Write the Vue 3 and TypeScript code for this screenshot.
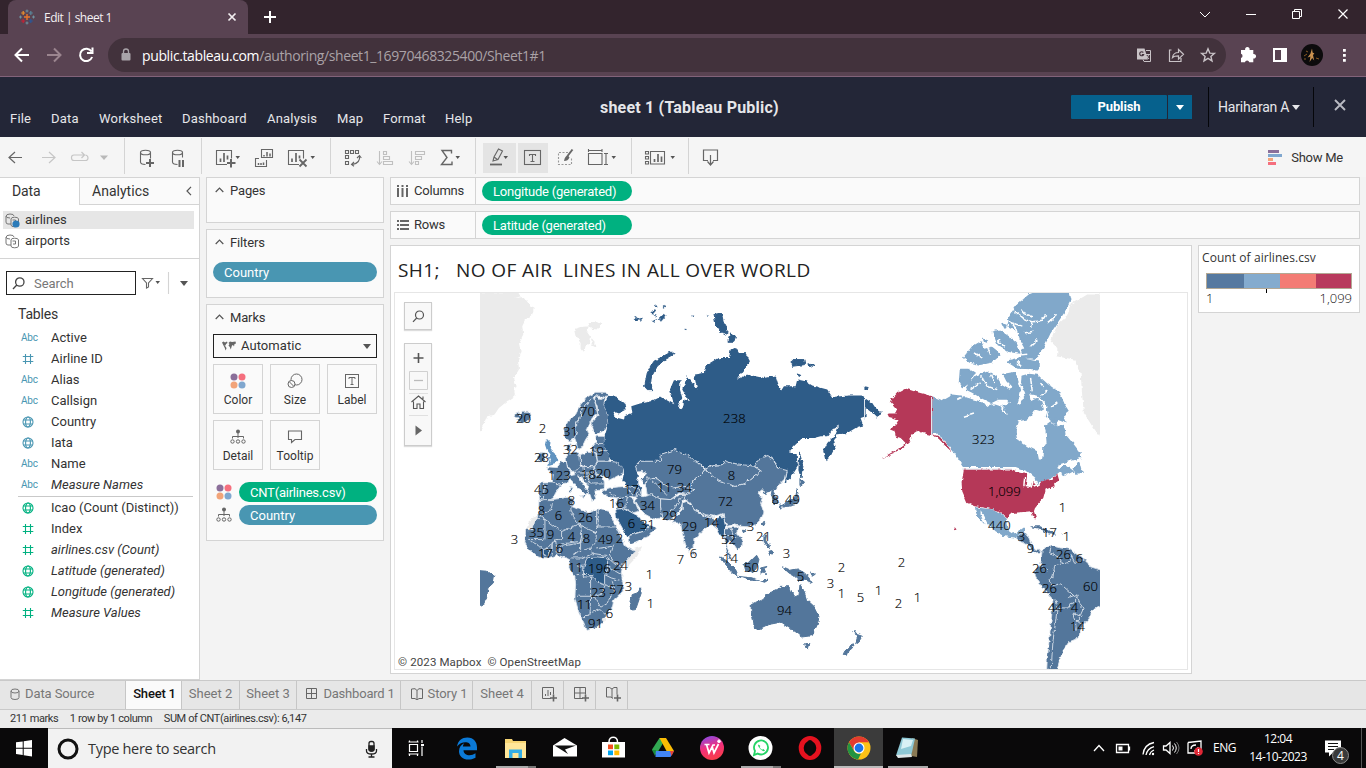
<script setup lang="ts">
interface Field { kind: 'abc' | 'num' | 'geo'; name: string; italic?: boolean }
interface MarkLabel { t: string; x: number; y: number }

const menus: string[] = ['File', 'Data', 'Worksheet', 'Dashboard', 'Analysis', 'Map', 'Format', 'Help']

const dimensions: Field[] = [
  { kind: 'abc', name: 'Active' },
  { kind: 'num', name: 'Airline ID' },
  { kind: 'abc', name: 'Alias' },
  { kind: 'abc', name: 'Callsign' },
  { kind: 'geo', name: 'Country' },
  { kind: 'geo', name: 'Iata' },
  { kind: 'abc', name: 'Name' },
  { kind: 'abc', name: 'Measure Names', italic: true },
]
const measures: Field[] = [
  { kind: 'geo', name: 'Icao (Count (Distinct))' },
  { kind: 'num', name: 'Index' },
  { kind: 'num', name: 'airlines.csv (Count)', italic: true },
  { kind: 'geo', name: 'Latitude (generated)', italic: true },
  { kind: 'geo', name: 'Longitude (generated)', italic: true },
  { kind: 'num', name: 'Measure Values', italic: true },
]

const raw = `20,523,419;2,542,429;70,587,412;31,570,432;32,570,450;28,541,458;19,596,452;123,559,476;18,588,475;20,603,474;45,541,490;8,571,501;8,541,511;6,558,516;26,585,518;16,616,504;17,631,490;11,664,488;34,684,488;79,674,470;34,647,506;29,669,516;6,631,524;31,647,525;29,689,527;35,536,533;9,550,535;4,571,537;8,586,539;49,605,540;2,619,539;3,514,540;17,545,554;6,559,549;11,575,568;196,599,569;24,620,566;23,598,593;57,616,590;3,628,587;11,584,605;6,609,614;91,595,624;1,649,575;1,650,604;7,680,560;6,693,554;238,734,419;8,731,476;72,725,502;8,775,500;49,792,500;14,711,523;3,750,527;52,728,540;21,763,537;14,730,559;50,751,568;3,786,554;5,800,577;94,784,611;2,841,568;3,830,584;1,841,594;5,860,598;1,878,591;2,901,563;2,898,604;1,917,598;323,983,440;1099,1004,492;440,999,526;1,1062,508;17,1049,533;1,1066,537;3,1021,537;9,1030,549;26,1063,555;6,1079,559;26,1039,569;60,1090,587;26,1049,589;44,1055,608;4,1074,608;14,1077,627`
const labels: MarkLabel[] = raw.split(';').map((r) => {
  const [n, x, y] = r.split(',').map(Number)
  return { t: n.toLocaleString('en-US'), x, y }
})
</script>

<template>
  <div class="screen">
    <!-- browser tabs -->
    <div class="tabstrip">
      <div class="tab">
        <svg class="fav" width="16" height="16" viewBox="0 0 16 16" fill="none">
          <path d="M8 5v6M5 8h6" stroke="#e8762d" stroke-width="1.400" />
          <path d="M4.200 2v4M2.200 4h4" stroke="#eb912c" stroke-width="1.200" /><path d="M11.800 2v4M9.800 4h4" stroke="#59879b" stroke-width="1.200" />
          <path d="M4.200 10v4M2.200 12h4" stroke="#c72035" stroke-width="1.200" /><path d="M11.800 10v4M9.800 12h4" stroke="#2b5798" stroke-width="1.200" />
          <path d="M8 .5v3M6.500 2h3M1.500 6.500v3M0 8h3M14.500 6.500v3M13 8h3M8 12.500v3M6.500 14h3" stroke="#7199a6" stroke-width=".9" />
        </svg>
        <span class="tabtitle">Edit | sheet 1</span>
        <svg class="tabclose" width="10" height="10" viewBox="0 0 10 10"><path d="M1.500 1.500l7 7M8.500 1.500l-7 7" stroke="#f2eef0" stroke-width="1.700" /></svg>
      </div>
      <svg class="newtab" width="14" height="14" viewBox="0 0 14 14"><path d="M7 1v12M1 7h12" stroke="#fff" stroke-width="2" /></svg>
      <svg class="winbtns" width="186" height="34" viewBox="1180 0 186 34" fill="none" stroke="#fff">
        <path d="M1200 12l5 5 5-5" /><path d="M1246 14.500h10" />
        <path d="M1292.500 11.500h7v7h-7zM1294.500 11v-1.500h7v7h-1.500" /><path d="M1338.500 9.500l9 9M1347.500 9.500l-9 9" stroke-width="1.200" />
      </svg>
    </div>
    <div class="addressbar">
      <svg width="108" height="42" viewBox="0 34 108 42" fill="none" stroke="#fff" stroke-width="2">
        <path d="M29 55H16M22 48.500L15.500 55l6.500 6.500" />
        <path d="M47 55h13M54 48.500l6.500 6.500-6.500 6.500" stroke="#9b858f" />
        <path d="M91.500 51.500a6.200 6.200 0 1 0 .6 5.500M92.500 47.500v5.500h-5.500" />
      </svg>
      <div class="omnibox">
        <svg width="34" height="34" viewBox="108 38 34 34"><rect x="121.500" y="53" width="9" height="7.500" rx="1" fill="#a9a4a9" /><path d="M123.500 53v-1.500a2.500 2.500 0 0 1 5 0V53" stroke="#a9a4a9" stroke-width="1.300" fill="none" /></svg>
        <span class="url"><b>public.tableau.com</b>/authoring/sheet1_16970468325400/Sheet1#1</span>
        <svg class="omniicons" width="96" height="34" viewBox="1130 38 96 34" fill="none" stroke="#c9c3c7" stroke-width="1.200">
          <path d="M1137 48.500h7.500l3.500 11h-11z" fill="#c9c3c7" stroke="none" /><path d="M1146 50.500h4.500v11h-6.500l-1-2M1145.500 54.500h4.500M1149 54q-1 3-3 4.500M1146.500 56l2.500 3" stroke-width="1" /><path d="M1143.300 52.500a2 2 0 1 0 .3 2h-1.800" stroke="#42323c" />
          <path d="M1171.500 50h-2v11.500h11.500V58M1172.500 57.500c.5-3.500 3-5 6-5V49.500l5 4.800-5 4.800v-3.200c-3 0-4.800.3-6 1.600z" />
          <path d="M1208 48.800l1.800 4.300 4.600.3-3.500 3 1.100 4.500-4-2.500-4 2.500 1.100-4.500-3.500-3 4.600-.3z" stroke-width="1.400" />
        </svg>
      </div>
      <svg class="exts" width="140" height="42" viewBox="1226 34 140 42">
        <path d="M1241 50h4.200a2.300 2.300 0 1 1 4.300 0h3.800v4a2.300 2.300 0 1 1 0 4.500v3.700h-4a2.300 2.300 0 0 0-4.400 0h-3.900v-4.200a2.200 2.200 0 0 0 0-4.200z" fill="#fff" />
        <path d="M1273 48h14v14h-14zM1275 50v10h6V50z" fill="#fff" fill-rule="evenodd" />
        <circle cx="1312" cy="55" r="11" fill="#0c0b0c" /><path d="M1312 48.500l.6 4 1.800 1-1.400 1.500 1.200 5.500-2-2.500-2.600 4 .8-5.500-2.800 1 2.800-3.800z" fill="#c9914f" /><path d="M1304 56l3-2M1316 58l3 1M1306 51l2 1M1304 59h2" stroke="#8a5a24" />
        <path d="M1343 49h2.800v2.800h-2.800zM1343 54h2.800v2.800h-2.800zM1343 59h2.800v2.800h-2.800z" fill="#fff" />
      </svg>
    </div>

    <!-- application header -->
    <header class="apphead">
      <nav class="menu"><span v-for="m in menus" :key="m">{{ m }}</span></nav>
      <div class="doctitle">sheet 1 (Tableau Public)</div>
      <div class="headright">
        <div class="publish"><span>Publish</span><i><svg width="8" height="5" viewBox="0 0 8 5"><path d="M0 0h8L4 5z" fill="#fff" /></svg></i></div>
        <div class="user">Hariharan A<svg width="8" height="5" viewBox="0 0 8 5"><path d="M0 0h8L4 5z" fill="#e6e6ea" /></svg></div>
        <svg class="closeedit" width="12" height="12" viewBox="0 0 12 12"><path d="M1 1l10 10M11 1L1 11" stroke="#b9bac2" stroke-width="1.900" /></svg>
      </div>
    </header>

    <!-- toolbar -->
    <div class="toolbar">
      <svg class="tg" width="124" height="36" viewBox="0 138 124 36" fill="none" stroke="#666" stroke-width="1.200">
        <path d="M22 157.500H9M15 152l-6 5.500 6 5.500" />
        <g stroke="#c6c6c6"><path d="M42 157.500h13M49 152l6 5.500-6 5.500" /><path d="M80 160.500h-6q-2.500 0-2.500-2.500v-.5q0-2.500 2.500-2.500H84M81.500 152l3 3-3 3M76 160.500h9.500q2.500 0 2.500-2.500t-2.500-3" /></g>
        <path d="M100 155.500h8l-4 4.500z" fill="#b9b9b9" stroke="none" />
      </svg>
      <svg class="tg" width="76" height="36" viewBox="125 138 76 36" fill="none" stroke="#666" stroke-width="1.100">
        <ellipse cx="145.500" cy="152.500" rx="5" ry="2.300" /><path d="M140.500 152.500v9.500q0 2.500 5 2.500M150.500 152.500v6" />
        <path d="M150 159v8M146 163h8" stroke-width="2" />
        <ellipse cx="177.500" cy="152.500" rx="5" ry="2.300" /><path d="M172.500 152.500v9.500q0 2.500 5 2.500M182.500 152.500v5" /><path d="M179.500 160v7M183 160v7" stroke-width="2" />
      </svg>
      <svg class="tg" width="128" height="36" viewBox="202 138 128 36" fill="none" stroke="#666" stroke-width="1.100">
        <path d="M227 164.500h-10.500v-14H231.500v8" /><path d="M220.500 158.500v3.500M224 153v9M227.500 155.500v4" stroke-width="1.700" /><path d="M231 159v8.500M227 163h8.500" stroke-width="2" /><path d="M235.500 156h4.500l-2.300 3z" fill="#555" stroke="none" />
        <path d="M261.500 157.500v-8h11v8zM259 158.500h-3.500v8h11v-6.500" /><path d="M264 155v1.500M267 152v4.500M270 153.500v3M258.500 163v2M261 163v2M263.500 162.500v2.500" stroke-width="1.500" />
        <path d="M299 164.500h-10.500v-14H303.500v8" /><path d="M292 158.500v3.500M296 153v9M299.500 155.500v3" stroke-width="1.700" /><path d="M299.500 159.500l7 7M306.500 159.500l-7 7" stroke-width="1.800" /><path d="M310.500 156h4.500l-2.300 3z" fill="#555" stroke="none" />
      </svg>
      <svg class="tg" width="144" height="36" viewBox="331 138 144 36" fill="none" stroke="#666" stroke-width="1.100">
        <path d="M345.500 150.500h3v3h-3zM350.500 150.500h3v3h-3zM355.500 150.500h3v3h-3zM345.500 155.500h3v3h-3zM345.500 161.500h3v3h-3z" /><path d="M359.500 156q1 7-7 8.500M357 158l2.500-2.500 1.800 2.500M354 162l-2.500 2.500 2.500 1.800" />
        <g stroke="#c0c0c0"><path d="M379.500 151v13M377 161.500l2.500 3 2.500-3M383.500 151.500h3v3h-3zM383.500 156.500h6v3h-6zM383.500 161.500h9v3h-9z" /><path d="M411.500 151v13M409 161.500l2.500 3 2.500-3M415.500 151.500h9v3h-9zM415.500 156.500h6v3h-6zM415.500 161.500h3v3h-3z" /></g>
        <path d="M451.500 153.500v-3H442l5 7-5.500 7h10.500v-3" stroke-width="1.400" /><path d="M455.500 156h4.500l-2.300 3z" fill="#555" stroke="none" />
      </svg>
      <svg class="tg" width="155" height="36" viewBox="476 138 155 36" fill="none" stroke="#666" stroke-width="1.100">
        <path d="M483 143h33v30h-33zM518 143h30v30h-30z" fill="#e4e4e4" stroke="none" />
        <path d="M493 161l1-4 4.500-8 4 2-4.500 8.500zM494 157l3.500 2.500" /><path d="M490 164.500h12" stroke-width="1.800" /><path d="M503.500 156h4.500l-2.300 3z" fill="#555" stroke="none" />
        <rect x="524.500" y="150.500" width="16" height="14" /><path d="M529.500 156v-1.500h6v1.500M532.500 154.500v7M530.500 161.500h4" />
        <path d="M568 152.500h-9.500v12h13v-6" stroke="#999" stroke-dasharray="2 1.500" /><path d="M572.500 149.500l-5 6.500" stroke-width="2" /><path d="M568 155.500q-3 0-4 5.500 4 0 5.500-3.500z" fill="#666" stroke="none" />
        <path d="M588.500 153.500h13.500v11h-13.500zM588.500 149v3M602 149v3M588.500 150.500H602M604 153.500h4M604 164.500h4M606 153.500v11" /><path d="M611.500 156h4.500l-2.300 3z" fill="#555" stroke="none" />
      </svg>
      <svg class="tg" width="56" height="36" viewBox="632 138 56 36" fill="none" stroke="#666" stroke-width="1.100">
        <path d="M645.500 151.500h3v2.500h-3zM645.500 156.500h3v2.500h-3zM645.500 161.500h3v2.500h-3zM650.500 151.500H664.500v12.500H650.500z" /><path d="M654.500 159v3M658 154v8M661.500 156.500v5.500" stroke-width="1.700" /><path d="M670.500 156h4.500l-2.300 3z" fill="#555" stroke="none" />
      </svg>
      <svg class="tg last" width="56" height="36" viewBox="689 138 56 36" fill="none" stroke="#666" stroke-width="1.200"><path d="M708 160.500h-4.500v-10.500H717.500v10.500H713M710.500 155v9M707.500 161.500l3 3.500 3-3.500" /></svg>
      <div class="showme">
        <svg width="15" height="16" viewBox="0 0 15 16"><path fill="#8b6f9a" d="M0 0h11v3H0z" /><path fill="#80a7cf" d="M0 4h14v3H0z" /><path fill="#f2a479" d="M0 8h5v3H0z" /><path fill="#f56f7e" d="M0 12h8v3H0z" /></svg>
        <span>Show Me</span>
      </div>
    </div>

    <!-- workspace -->
    <main class="work">
      <aside class="datapane">
        <div class="ptabs"><span class="pt on">Data</span><span class="pt">Analytics<svg width="6" height="10" viewBox="0 0 6 10"><path d="M5 .8L1 5l4 4.200" fill="none" stroke="#555" stroke-width="1.200" /></svg></span></div>
        <div class="sources">
          <div v-for="(s, i) in ['airlines', 'airports']" :key="s" class="src" :class="{ sel: i === 0 }">
            <svg width="15" height="15" viewBox="0 0 15 15" fill="none" stroke="#777"><path d="M6 11H3Q1 11 1 9V3.500Q1 1 5 1t4 2M1 3q0 2 4 2" /><path d="M6 6q0-1.800 3.700-1.800T13.500 6v6q0 1.800-3.800 1.800T6 12zM7.500 7h3v3H8" /><circle v-if="i === 0" cx="11" cy="11" r="3.600" fill="#2b7bb9" stroke="none" /></svg>
            <span>{{ s }}</span>
          </div>
        </div>
        <div class="searchrow">
          <div class="search"><svg width="13" height="13" viewBox="0 0 13 13" fill="none" stroke="#444" stroke-width="1.300"><circle cx="7.800" cy="5" r="4.200" /><path d="M4.800 8L1 12" /></svg><span>Search</span></div>
          <svg width="58" height="24" viewBox="136 271 58 24" fill="none" stroke="#666" stroke-width="1.100"><path d="M142.500 278.500h10l-4 4.500v4l-2 1v-5z" /><path d="M155.500 281h4.500l-2.300 3z" fill="#555" stroke="none" /><path d="M168.500 272v22" stroke="#d4d4d4" /><path d="M180 281h8l-4 5z" fill="#555" stroke="none" /></svg>
        </div>
        <div class="tables">Tables</div>
        <template v-for="(group, g) in [dimensions, measures]" :key="g">
          <div class="fields" :class="g ? 'green' : 'blue'">
            <div v-for="f in group" :key="f.name" class="field">
              <span class="fi">
                <em v-if="f.kind === 'abc'">Abc</em>
                <svg v-else-if="f.kind === 'num'" width="12" height="12" viewBox="0 0 12 12" fill="none" stroke="currentColor" stroke-width="1.100"><path d="M3.500 1v10M8.500 1v10M.8 3.500h10.500M.8 8.500h10.500" /></svg>
                <svg v-else width="12" height="12" viewBox="0 0 12 12" fill="none" stroke="currentColor" stroke-width="1.100"><circle cx="6" cy="6" r="5" /><ellipse cx="6" cy="6" rx="2.400" ry="5" /><path d="M1.500 4h9M1.500 8h9" /></svg>
              </span>
              <span class="fn" :class="{ it: f.italic }">{{ f.name }}</span>
            </div>
          </div>
        </template>
      </aside>

      <section class="cards">
        <div class="card pages"><h4><svg width="9" height="6" viewBox="0 0 9 6"><path d="M.7 5L4.500 1l3.800 4" fill="none" stroke="#555" stroke-width="1.200" /></svg>Pages</h4></div>
        <div class="card filters"><h4><svg width="9" height="6" viewBox="0 0 9 6"><path d="M.7 5L4.500 1l3.800 4" fill="none" stroke="#555" stroke-width="1.200" /></svg>Filters</h4><div class="pill bluep">Country</div></div>
        <div class="card marks">
          <h4><svg width="9" height="6" viewBox="0 0 9 6"><path d="M.7 5L4.500 1l3.800 4" fill="none" stroke="#555" stroke-width="1.200" /></svg>Marks</h4>
          <div class="marktype">
            <svg width="14" height="10" viewBox="0 0 14 10" fill="#666"><path d="M0 1.500l1.500-1L3 1.500 5 .5 5.500 2 4 3 3.500 4.500 2.500 4.500 4 6 4.500 7.500 3.500 9.500 2.800 7 1.500 4.500zM6.500 2L8 .5l2 .5 3.500-.5L14 2.500 12.500 3l-.5 2.500-1-1.500-1 .5L9.500 6l-.7 2.500L7.800 6 6.500 4.500 7.500 3z" /></svg>
            <span>Automatic</span>
            <svg width="8" height="5" viewBox="0 0 8 5"><path d="M0 0h8L4 5z" fill="#555" /></svg>
          </div>
          <div class="mbtns">
            <div class="mbtn"><svg width="16" height="16" viewBox="0 0 16 16"><circle cx="4" cy="4" r="3.500" fill="#8b6f9a" /><circle cx="12" cy="4" r="3.500" fill="#f56f7e" /><circle cx="4" cy="12" r="3.500" fill="#f2a479" /><circle cx="12" cy="12" r="3.500" fill="#80a7cf" /></svg>Color</div>
            <div class="mbtn"><svg width="16" height="16" viewBox="0 0 16 16" fill="none" stroke="#666"><circle cx="9.500" cy="6.500" r="5.500" /><circle cx="4.500" cy="11" r="3.500" fill="#fafafa" /><path d="M2.500 9l4 4" /></svg>Size</div>
            <div class="mbtn"><svg width="16" height="16" viewBox="0 0 16 16" fill="none" stroke="#666"><rect x="1.500" y="1.500" width="13" height="13" /><path d="M5 6V4.500h6V6M8 4.500v7M6.500 11.500h3" /></svg>Label</div>
            <div class="mbtn"><svg width="16" height="16" viewBox="0 0 16 16" fill="none" stroke="#666"><circle cx="8" cy="2.500" r="2" fill="#666" stroke="none" /><path d="M8 4v5M2.500 9.500V7.500h11v2" /><circle cx="2.500" cy="12.500" r="1.700" /><circle cx="8" cy="12.500" r="1.700" /><circle cx="13.500" cy="12.500" r="1.700" /></svg>Detail</div>
            <div class="mbtn"><svg width="16" height="16" viewBox="0 0 16 16" fill="none" stroke="#666" stroke-width="1.100"><path d="M1.500 2h13v8.500H8L4.500 13.500v-3h-3z" /></svg>Tooltip</div>
          </div>
          <div class="mrow"><svg width="16" height="16" viewBox="0 0 16 16"><circle cx="4" cy="4" r="3.500" fill="#8b6f9a" /><circle cx="12" cy="4" r="3.500" fill="#f56f7e" /><circle cx="4" cy="12" r="3.500" fill="#f2a479" /><circle cx="12" cy="12" r="3.500" fill="#80a7cf" /></svg><div class="pill greenp">CNT(airlines.csv)</div></div>
          <div class="mrow"><svg width="16" height="16" viewBox="0 0 16 16" fill="none" stroke="#666"><circle cx="8" cy="2.500" r="2" fill="#666" stroke="none" /><path d="M8 4v5M2.500 9.500V7.500h11v2" /><circle cx="2.500" cy="12.500" r="1.700" /><circle cx="8" cy="12.500" r="1.700" /><circle cx="13.500" cy="12.500" r="1.700" /></svg><div class="pill bluep">Country</div></div>
        </div>
      </section>

      <section class="canvas">
        <div class="shelf"><div class="sh"><svg width="12" height="12" viewBox="0 0 12 12" fill="#666"><path d="M0 0h2v2H0zM4.500 0h2v2h-2zM9 0h2v2H9zM0 3h2v9H0zM4.500 3h2v9h-2zM9 3h2v9H9z" /></svg>Columns</div><div class="pill greenp">Longitude (generated)</div></div>
        <div class="shelf"><div class="sh"><svg width="12" height="12" viewBox="0 0 12 12" fill="#666"><path d="M0 1h2v2H0zM0 5h2v2H0zM0 9h2v2H0zM3 1h9v2H3zM3 5h9v2H3zM3 9h9v2H3z" /></svg>Rows</div><div class="pill greenp">Latitude (generated)</div></div>
        <div class="lower">
          <div class="view">
            <h1>SH1;&nbsp;&nbsp; NO OF AIR&nbsp; LINES IN ALL OVER WORLD</h1>
            <div class="mapbox">
              <svg class="map" width="792" height="376" viewBox="395 293 792 376">
                <defs>
                  <clipPath id="world"><rect x="480" y="293" width="620" height="376" /></clipPath>
                  <filter id="coast" x="0" y="0" width="100%" height="100%" filterUnits="objectBoundingBox"><feTurbulence type="fractalNoise" baseFrequency=".22" numOctaves="2" seed="4" /><feDisplacementMap in="SourceGraphic" scale="4" xChannelSelector="R" yChannelSelector="G" /></filter>
                </defs>
                <g clip-path="url(#world)">
                  <g filter="url(#coast)">
                    <rect x="480" y="293" width="620" height="376" fill="#fff" />
                    <g transform="translate(480.600 289.600) scale(.33333)" class="land">
                      <path class="nd" d="M-9 8H110l8 12-18 5 30-3 20 28 10 5-5 20-20 15-10 20 3 25-13 25 5 25-8 25 3 30-15 25 8 25-10 20 7 8-25 17-25 20-13 20-22 5-8 20-12 25-9 0zM280 118l20-6 25-2-7 15 10 15-3 20-13 12-4 16-8-10V160l-15-20zM320 105l25-10 17 10-7 15-20-2zM333 145l12 15-2 12-10-5z" />
                      <path d="M102 372l10-4 6 10 7-10h23l4 10-7 15-20 7-17-8 7-6-11-4z" />
                      <path class="uk" d="M196 453h14l-2 17 7 8 13 25 5 9-8 8-22 6 5-14-3-10 5-7-12-15-5-15z" />
                      <path d="M180 488l12 2 3 10-5 14-13 3-5-12z" />
                      <path d="M252 415l10-20 23-20 15-30 20-23 25-14h30l8 10-8 7-10-5-25 0-20 22-15 15-7 30-13 15 2 30-5 15-14 7-13-7z" />
                      <path d="M298 385l7-30 15-15 18-18 7 23 7 27-17 13-10 20-5 15 5 15-10 15-12 25-11 5-6-25-4-10 5-15-2-30z" />
                      <path d="M345 318l13 12 17-8-5 23 10 30 3 30-8 15-25 12h-10l-7-17 2-17 17-18-2-30-8-20z" />
                      <path d="M258 470l10-8 4 18-7 8-7-6zM345 440h25l2 20-2 15 15 15 5 15-10 10h-30l-2-25-15-2 7-23 10-5zM350 462h20M333 480l50 4" />
                      <path d="M300 495l20-7 25 2 5 25-8 17-32-2-12-10z" />
                      <path d="M262 490h23l13 5 2 30-8 20h-22l-12-20-1-20z" />
                      <path d="M240 515h17l5 25 8 8-4 20-4 12-17 2-5 8-25-12 3-23-18-15 5-8 23 2z" />
                      <path d="M178 580h37l25 8-15 22-7 15-18 11-12-4-12-2zM192 582l-4 46" />
                      <path d="M285 545l13-15 42 2 10 28-5 30-10 10-10-5-25-35h-15zM290 550l55 0M310 532l5 40M300 562l40-4M325 560l5 35" />
                      <path d="M262 560l23-5 13 10 2 10 25 35-10 5-15-15-15-10-10-15zM300 618l14 0-4 8zM268 590l6 2-2 18-6-4z" />
                      <path d="M350 515h35l25 3 20 17-2 15-23 12-20 10-15-12-25-8-3-20z" />
                      <path d="M340 555l25 3 7 22-2 20-30 5 8 20-13 10-7-20-10-15 7-25zM325 580h45" />
                      <path d="M365 605l20-10 25-3 40-2 15 10-3 20-52 5-25-3-17-7z" />
                      <path class="ru" d="M430 560h40v20l12 15 0 15-42-15z" />
                      <path d="M436 590l40 8 10 28-12-4-15 0-6-12z" />
                      <path class="ru" d="M385 318l25 7 22 15 3 22-20 10-17-7 8 22 24 6 2-13 23-10-3-20 26-8 32-7 30-15 15 10 25 14-12-44 12-28h20l-2 28 7 25-13 25 13 10 7-30 13 5-20-35 15-40 30 40-10-45 30-5 5-20 40-25h30l5-25 15-8 10 18h20l13 25-13 20-25 33 30-13 50 10 35-7 7 22 10 23 8-13h35l5-20 25 5 20 13 45 12 15 22 50-4h35l35 22 10 15 18 13-13 17-15-15-20-15v25l-15 5 8 23-18 4-30 18-32 5-8 20 5 15-15 30-15 15-7-30 12-25 25-25 10-27-20 12-15 20h-20l-20 5h-35l-25 25-15 18 23 7 4 35-22 35-18 15 6-20 2-17-25-3-15-35-20-7-15 7-10 25-15 3-50-8-35-10-5 10h-40l-15 13-20-18-15-5-20-20-20-5-15-10-47 15 2 20h-60l-15 15 5 18 5 12-10 20-40-5 5-25v-15l-20-17-22-6-3-22-15-15 2-35 11-35-3-30-10-30z" />
                      <path class="ru ns" d="M492 290l8-40 20-35 52-28 8 8-30 17-20 18-18 32-2 23 8 15h-18zM700 75l22-5 6 25 12 20-2 20-26-15-7-20zM742 155l8-25 15 10-5 15zM935 210l35 0 2 15-37 5zM980 222l20 5-8 5zM950 250l12 5-6 6zM1150 292l16 2-4 6-12-2zM957 490l10 40-6 32-6-20z" />
                      <path class="ru dots" d="M460 85l12-3 5 6-12 5zM478 86l8 2-6 8zM510 70l10-11 4 6-8 9zM515 95l14-6-6 10zM535 88l16-16 6 6-16 18zM520 48l8-3 2 5zM548 50l8 2-8 5zM520 78l10 0-4 5zM633 78l5 1-3 3zM680 78l5 1-3 3zM615 118l6 1-3 3z" />
                      <path d="M465 530l15-15h60l-2-20 47-15 15 10 20 5 20 20 15 5 17 20-12 20-20 10-15 30-25-8-30 8-15-10-25-22-20-3v25l-15-5-15-15 18-18-13-7-15 3z" />
                      <path d="M625 600l13-25 22-20 15-17 15 17 25 20 50 15 30-10 30-25 17-10-20-15 18-25 22-7 18 12 10 25 30 8-5 22-15 15-15 20-15 5-15 10-10-15-13 10 13 15-5 15 10 30-10 20-15 15-20 7-25-2-20-5-20 5-10-20-2-18-28 8-25-5-35-15-10-20-25-15z" />
                      <path d="M675 535l15-7 40-3 5-13 15 8 35 5 35 5 22 15-17 10-30 25-30 10-50-15-25-20z" />
                      <path d="M605 640l15-5 20 25 35 20 30 10 20-15-7 20-13 20-10-10-20 10-20 20-15 15-2 20-13 15-10-20-10-35-5-30-25 0 10-20 20-20zM636 782l6 4v12l-6 0zM640 664l38 18 22 2" />
                      <path class="dk" d="M708 700l12-25 10 15 5 20-5 30-10 5-12-25z" />
                      <path d="M735 715l40-3-7 18 17 20v15l-15 15-10-15-15-10-7 10 7 25 10 20-7 2-10-22-5-30zM750 712l10 30M738 740l35 5" />
                      <path class="ns" d="M958 566l14 12-14 10zM950 598l4 27-9 17-25 6-20 2 25-15 20-13zM898 645l6 8-4 6zM875 600l10 20 7 20-12 2-8-27zM718 800l22 15 25 25 7 16-17-6-20-25zM770 860l45 5 20 7h-30zM840 874l22-2-10 6zM790 822l15-2 23-23 7 13-7 25-10 13-23-6zM840 835l22-5-14 8 7 17-9-10-4 11zM850 735l8 2-3 18 10 10 5 15-12-12-8-14zM862 785l12-2 2 10-8 4zM850 695l3 2-4 12-4-6zM788 722l8 2-4 6zM905 832l10 3 15 7 20-4 22 12 13 15 10 15-17-8h-23l-15-14-15-8zM990 850l14 4-10 6z" />
                      <path class="ns" d="M812 945l36-15 14-20 16-5 12-5 10-10 25 2 3 13 17 17 10-4 3-33 10 15 10 30 22 20 15 30-5 25-15 33-30 4-15-12-15-10-10-5-25-17-38 7-27 13h-13l-4-28-6-25zM972 1062h16l-5 16-7-3zM1120 1022l10 13 15 5-10 15-10 7 5-17zM1118 1062l2 8-15 15-5 13-12-3 4-10z" />
                      <g transform="translate(0 480)">
                        <path d="M500 85l30 3 30 22 15 5 25-3 25 3 15 5-20 15-25-5-25 20-30-2-20-8-20-5-5-25zM510 90l50 45" />
                        <path d="M468 130l17 12 25-7 30 13v27l8 30-28 3-25-13-15-15-15-25z" />
                        <path d="M540 148l30 2 30-15 15 0-10 25-5 20-20 20-10 12-22-4-8-33zM605 140l-35 50" />
                        <path d="M410 145l30-5 20 10 15 35-20 5-25-15-25 5zM440 140l-5 38M385 130l20 10" />
                        <path class="dk" d="M405 180l25-5 25 15 20 10 13 20 22 5-20 20-45 13-5 7-15-30-17-30z" />
                        <path d="M445 258l45-13 20-20 15 10-20 25-35 15-23 7z" />
                        <path class="nd" d="M455 300l30-10-15 30-32 34-3-24 25-25zM155 205l22-8-12 13-5 25h-22z" />
                        <path d="M175 155l15-5 25 0 55-8 10 13-8 15 18 8 35 12 25-12 35 7 15 35 15 30 10 20 10 20 20 12 8 3-25 25-13 20-3 20 5 30v25l-27 25-5 25-15 20-15 25-20 15-28 8-7-23-15-30-12-45 2-40-2-25-18-25 2-25-17-7-20-6-30 8-25-2-30-23-12-20 2-40h22l5-25 12-12z" />
                        <path class="dk" d="M320 325l30-3 32 3-2 25-8 25v30l-17-5-20-18h-27l2-30zM185 300l18-3 2 20-20 0z" />
                        <path class="bd" d="M215 160l-2 18-35 20M165 210h28v60h-50M178 198l65 48 48-22-20-40 0-20M291 224l57 26M348 180v52h60M353 180v54M243 246v20l-25 8-20 25M300 224l5 50-65 10M243 290l55-10 5-20M300 280l0 20-20 15M348 234l-2 44-18 20 12 14 40 6M308 300l20-2M340 312l-35 15M395 290l-48 8M400 285l-12 35 15 20 30 5M382 325l25 22 20 5M380 350l50 30M372 375l20 10 35 10M288 375h50M290 440h50l20-5 15-30M330 382l0 60M375 405l30 20M340 440l20 32 20-12 15-30M330 440l-2 60-30 2M328 490l30-10 22 20M395 395l10 30M150 275l20 10 15 15M215 275v40M225 270l5 42M240 285l-5 28M272 325h35M290 350l20 0" />
                        <circle class="nd" cx="370" cy="510" r="6" />
                        <path class="ns" d="M480 415l2 15-17 50-15 2-2-22 7-25 15-5zM-9 363l29 2 22 15-4 20-16 15-4 30-10 20-18 3z" />
                      </g>
                    </g>
                    <g transform="translate(880.600 289.600) scale(.33333)" class="land">
                      <path class="nd" d="M669 15h-49l-50 30-10 35-30 25-20 50 20 20v25l50 10 20 40 5 70 5 50 25 40 20 27h14z" />
                      <path class="ca" d="M155 320l30 12 30-17 25 3 20 7 40 10 25 15 5-10 30 10 20-5 5-40 15-30 12 2 8 30-10 38 10-5 15-25 10-10 5 30 20-10 10 10-25 40-15 15-25 5-10 30 5 25 30 20 30 15 5 25h10l3-35 10-15-3-35-5-15 20-15 20 15 20-5 5 30 25 30 20 25 2 15-37 10-30 10-5 15 25-15 25 20-30 15-10-15-20 15-30 15-20 10-5-20-25-20-35-13H250l-25-37-15-20-25-30-20-15h-10z" />
                      <path class="ca ns" d="M580 540l15-20 5 20 10 8-25 2zM425 260l20-5 25 3 30 27 35 25 15 35 12 20-15 12 8 20-32-12 5 20-30-25 5-30-15-20-20-15-30-5-15-20zM262 290l25-30 35-12 25 15 15 25 25 15v25h-35l-20 10-30-15-25-15-20-10zM240 240h22l18 10-13 28-22 15-8-13zM385 82l25-35 35-30 25-10h95l5 22-23 42-20 30-20 30-25 52-45 6-15-30-15-40-22-10zM250 205l25-32 25-15 12 22 22-6 25 20-25 22-32 8-35-7zM338 128l17-5 30 20 22 20 10 27-32-5-32-20zM380 215l40-10 52 10v22l-60-2zM370 255l30-5 12 25-15 18-18-20zM425 180l52 8-10 18-42-5zM368 105l8 2-3 8zM310 150l10 4-6 6z" />
                      <path class="fj" d="M400 62l30 25 25 10 30-5 10-15M455 97l-5 15M420 60l10 12 25 10M500 100l30-25M395 100l30 10M430 130l30-5M450 170l20-20M280 190l25 15M300 260l20 30 30 10M330 255l10 25M270 300l30-20M500 300l-20 20M530 340l-20 15M250 380l30-10M450 265l5 40M230 330l20-10M350 150l20 20M390 200l50-6M360 350l20 25M320 170l10 25M410 215l10 15M480 280l10 15M390 150l20-8M258 312l35 18 32 18 22-8 40-2M415 270l10 30M470 330l25 25 10 40M385 90l20 25 12 40 12 22" />
                      <path class="ca" d="M452 345l14-20 16 10 8 24-12 8-20-6z" />
                      <path class="us" d="M28 335l22-25 25-13 25 8 25 7 30 8v117l-30-7-10-8-20 13-7 20-23 20-25 15-28 11 38-21 25-20-15-15-15-5-3-15-14-5 17-15 10-15-30-8-5-10h25l5-12zM155 435l20 5 25 25 12 20-17-15-20-22zM222 712l6 8-6 2zM20 498l8-3-2 5zM5 506l8-3-2 4z" />
                      <path class="us" d="M250 540h145l20 8 25 7-5 35 15 2 5-17 15 15 25-20 20-2 15-16 5 18-15 20-25 10-7 25-23 25-5 15 8 25-8-2-8-23-32 3-25 2-17 15-23-20-15-5-25-5-30-5-25-10-15-35-2-25z" />
                      <path class="fj" d="M412 545l25 5 8 8M432 562l-2 28M446 562l10 18-4 14M458 590l20-8" />
                      <path class="ca" d="M283 652l17 3 40 5 15 8 23 19 7 38 10 7 15-4 22-16-2 18-15 15-45-5-25-15-25-25-10-20-10-15 0 10 12 30-14-15-13-22z" />
                      <path d="M405 745l25-17 15 17 10 25 10 12h20l-5 6-20 2-20-25-20-10z" />
                      <path class="thin" d="M448 710h32l15 10 20 5 15 10h-25l-25-17-25-4zM540 730l8 2-6 3z" />
                      <path d="M485 780l25-12 30 7 25 3 25 17 25 15 10 20 44 14v100l-34 18-10 25-20 25-7 15-8 20-25 10-10 15-10 15-5 15-10 35 0 9h-32l2-36 7-70 6-60 4-50-22-25-20-25-15-30 20-25 3-25z" />
                      <path class="bd" d="M512 768l-5 22 25 8 15 25-25 5-5 35-12 10 10 15 25-5 45 40 0 15-15 5-8 12-22 0-18 12M480 830l20 15M522 930l8 25-5 40-8 60-5 84M547 823l20-5 5-20 10 20 20-2 10-10M562 925l25-10 20 45-8 18-22-5 5 15 25 20M605 978l-20 20 2 25" />
                    </g>
                  </g>
                  <path d="M931.500 397v38M962 469h50M864.500 399v21" stroke="#dfe6ee" stroke-width="1" />
                </g>
                <g class="labels"><text v-for="(l, i) in labels" :key="i" :x="l.x + 0.4" :y="l.y + 4.200">{{ l.t }}</text></g>
              </svg>
              <div class="mctl find"><svg width="13" height="13" viewBox="0 0 13 13" fill="none" stroke="#555" stroke-width="1.200"><circle cx="7.500" cy="5" r="4" /><path d="M4.700 8L1 11.800" /></svg></div>
              <div class="mctl zoomer"><svg width="27" height="102" viewBox="0 0 27 102" fill="none" stroke="#555"><path d="M13.500 9v10M8.500 14h10" stroke-width="1.600" /><path d="M4.500 27.500h18v18h-18z" stroke="#d0d0d0" /><path d="M9 36.500h9" stroke="#bbb" stroke-width="1.300" /><path d="M4 49.500h19M4 71.500h19" stroke="#e0e0e0" /><path d="M6.500 58L13.500 52l7 6M8.500 57.500v7h3.500v-4.500h3v4.500h3.500v-7M18 55v-2.500" stroke-width="1.100" /><path d="M10.500 81.500v10l6.500-5z" fill="#666" stroke="none" /></svg></div>
              <div class="credit">© 2023 Mapbox&nbsp; © OpenStreetMap</div>
            </div>
          </div>
          <div class="legend">
            <div class="lt">Count of airlines.csv</div>
            <div class="ramp"><i /><i /><i /><i /></div>
            <div class="lr"><span>1</span><span>1,099</span></div>
          </div>
        </div>
      </section>
    </main>

    <!-- sheet tabs -->
    <div class="sheets">
      <div class="st ds"><svg width="10" height="12" viewBox="0 0 10 12" fill="none" stroke="#777"><ellipse cx="5" cy="3" rx="4" ry="2" /><path d="M1 3v6.500q0 2 4 2t4-2V3" /></svg>Data Source</div>
      <div class="st on w55">Sheet 1</div><div class="st w58">Sheet 2</div><div class="st w57">Sheet 3</div>
      <div class="st w104"><svg width="12" height="12" viewBox="0 0 12 12" fill="none" stroke="#666"><path d="M.5.5h10v10H.5zM.5 5.500h10M5.500.5v10" /></svg>Dashboard 1</div>
      <div class="st w73"><svg width="12" height="12" viewBox="0 0 12 12" fill="none" stroke="#666"><path d="M.5 1L4 .7 6 2.500 8 .7l3.500.3v9.500H8L6 12 4 10.500H.5zM6 2.500V12" /></svg>Story 1</div>
      <div class="st w59">Sheet 4</div>
      <div class="st w32"><svg width="18" height="18" viewBox="540 685 18 18" fill="none" stroke="#666"><path d="M551 698.500h-8.500v-11h11v7M545.500 694v2M548 690v6M550.500 692v3" /><path d="M553.500 694.500v7M550 698h7" stroke-width="1.600" /></svg></div>
      <div class="st w32"><svg width="18" height="18" viewBox="540 685 18 18" fill="none" stroke="#666"><path d="M551 698.500h-8.500v-11h11v7M542.500 693h11M548 687.500v11" /><path d="M553.500 694.500v7M550 698h7" stroke-width="1.600" /></svg></div>
      <div class="st w32"><svg width="18" height="18" viewBox="540 685 18 18" fill="none" stroke="#666"><path d="M549 698.500l-2-1.500h-4.500v-9.500h3l2.500 1.500 2-1.500h3v7M548 689v9" /><path d="M553.500 694.500v7M550 698h7" stroke-width="1.600" /></svg></div>
    </div>
    <div class="status"><span>211 marks</span><span>1 row by 1 column</span><span>SUM of CNT(airlines.csv): 6,147</span></div>

    <!-- desktop taskbar -->
    <footer class="taskbar">
      <svg width="48" height="40" viewBox="0 728 48 40"><path d="M16 742.300l6.700-.9v6.300H16zM23.700 741.200l8.300-1.200v7.700h-8.300zM16 748.700h6.700v6.300l-6.700-.9zM23.700 748.700H32v7.700l-8.300-1.200z" fill="#fff" /></svg>
      <div class="tsearch"><svg width="40" height="40" viewBox="48 728 40 40"><circle cx="68" cy="748" r="9" fill="none" stroke="#111" stroke-width="3" /></svg><span>Type here to search</span><svg width="40" height="40" viewBox="352 728 40 40" fill="none" stroke="#222" stroke-width="1.300"><rect x="369" y="740.500" width="5" height="9.500" rx="2" /><path d="M369 745h5v3q0 2-2.500 2t-2.500-2z" fill="#222" /><path d="M366.500 748v2q0 3 5 3t5-3v-2M371.500 753v3M368.500 756h6" /></svg></div>
      <svg width="52" height="40" viewBox="392 728 52 40" fill="none" stroke="#fff" stroke-width="1.200"><path d="M409.500 744.500h8v7h-8zM409.500 742v-1.500M417.500 742v-1.500M409.500 754v2M417.500 754v2M408.500 742h10M408.500 754h10M422 740v3M422 746.500v9.500" /><path d="M421 744h3v2h-3z" fill="#fff" stroke="none" /></svg>
      <svg width="48" height="40" viewBox="444 728 48 40"><path d="M457 746.500c1-6 5-9 10.300-9 6.500 0 9.700 4.600 9.700 9.800v3h-13.500c.2 5.500 7.500 6.300 12 3v4.400c-8.500 4.300-16.500.6-16.500-6.500 0-4 2.200-6.600 5.200-8-.9 1.200-1.200 2.300-1.300 3.400h7.600c.2-6-9.500-5.800-13.500-.1z" fill="#0b7ad8" /></svg>
      <svg width="48" height="40" viewBox="492 728 48 40"><path d="M505 739h7l1 2h13v17h-21z" fill="#f7d574" /><path d="M505 743h21v15h-21z" fill="#ffe699" /><path d="M509 758v-8.500h13v8.500h-3.500v-5h-6v5z" fill="#35aee6" /><path d="M496 766h32v2h-32z" fill="#aaa" /><path d="M528 766h8v2h-8z" fill="#777" /></svg>
      <svg width="50" height="40" viewBox="540 728 50 40"><path d="M553 745.500l11.500-7.500 12.500 7.500v11h-24z" fill="#fff" /><path d="M554.500 745.500h21.500l-11 4 3 4.500z" fill="#111" /></svg>
      <svg width="48" height="40" viewBox="590 728 48 40"><path d="M602 742h23v15.500h-23z" fill="#fff" /><path d="M609 742c0-6.500 8.500-6.500 8.500 0" stroke="#fff" stroke-width="1.500" fill="none" /><path fill="#f25022" d="M608 744.500h5v4.700h-5z" /><path fill="#7fba00" d="M614.300 744.500h5v4.700h-5z" /><path fill="#00a4ef" d="M608 750.500h5v4.700h-5z" /><path fill="#ffb900" d="M614.300 750.500h5v4.700h-5z" /></svg>
      <svg width="48" height="40" viewBox="638 728 48 40"><path d="M659.500 738h6.500l-3.500 6-6.500 11-4-5.500z" fill="#31a852" /><path d="M659.500 738h6.500l8 13h-7.500z" fill="#fbbc04" /><path d="M655.500 751H674l-3.500 6h-15z" fill="#4285f4" /><path d="M652 750h4l-1 6z" fill="#1b8a3c" /><path d="M670 751h4l-2.500 5z" fill="#ea4335" /></svg>
      <svg width="50" height="40" viewBox="686 728 50 40"><defs><linearGradient id="w" x1="0" y1="0" x2=".3" y2="1"><stop offset="0" stop-color="#7a4df5" /><stop offset=".55" stop-color="#f22f7c" /><stop offset="1" stop-color="#f83c4f" /></linearGradient></defs><circle cx="712" cy="748" r="12" fill="url(#w)" /><path d="M704.500 744.500h5M706.500 744.500l2.500 8.500 4-8h2M712 746l2 7 4.500-9M719 739.500v3.500M717.200 741.300h3.600" stroke="#fff" stroke-width="1.700" fill="none" /></svg>
      <svg width="48" height="40" viewBox="736 728 48 40"><circle cx="760.500" cy="748" r="12" fill="#fff" /><path d="M754 755l1-4a7 7 0 1 1 2.700 2.600z" fill="none" stroke="#25d366" stroke-width="1.800" /><path d="M758.500 744.500q-1.500 1.500 2 4.700t4.500 1.300l-1.700-1.500-1.200.8q-2-1-2.500-2.800l.8-.9z" fill="#25d366" /><path d="M741 766h32v2h-32z" fill="#aaa" /><path d="M773 766h8v2h-8z" fill="#777" /></svg>
      <svg width="50" height="40" viewBox="784 728 50 40"><ellipse cx="810" cy="748" rx="8.800" ry="9.500" fill="none" stroke="#e5121f" stroke-width="5" /><ellipse cx="810" cy="748" rx="4" ry="8" fill="#0b0b0b" /></svg>
      <svg class="act" width="49" height="40" viewBox="834 728 49 40"><circle cx="859" cy="748" r="11.500" fill="#fbc116" /><path d="M849 742.300a11.500 11.500 0 0 1 20 0H859l-5 8.500z" fill="#e33b2e" /><path d="M849 742.300l5 8.700a6 6 0 0 0 7 2.500l-3 6a11.500 11.500 0 0 1-9-17.200z" fill="#229342" /><circle cx="859" cy="748" r="5.500" fill="#fff" /><circle cx="859" cy="748" r="4.400" fill="#1a73e8" /><path d="M834 766h49v2h-49z" fill="#bbb" /></svg>
      <svg width="48" height="40" viewBox="883 728 48 40"><path d="M912 738l6 2-1 17-6-1z" fill="#8a7a55" /><path d="M902 737.500l13 1-4 18-15-1z" fill="#8fc9d6" /><path d="M896 755l15-1 1 3-14 1z" fill="#dfe8ea" /><path d="M903 739l10 1-2 6-10 3z" fill="#d8f1f5" /><path d="M888 766h40v2h-40z" fill="#aaa" /></svg>
      <svg class="tray" width="124" height="40" viewBox="1084 728 124 40" fill="none" stroke="#fff" stroke-width="1.300">
        <path d="M1094 751l5-5.500 5 5.500" /><path d="M1116.500 744.500h12v8h-12z" /><path d="M1118.500 746.500h4v4h-4z" fill="#fff" stroke="none" /><path d="M1129.500 746.500v4" />
        <path d="M1143 754.500q1-10 11-12M1146 755q1-6.500 8-8.500M1149.500 755q.8-3.500 4.500-5" /><circle cx="1153" cy="754" r="1.200" fill="#fff" stroke="none" />
        <path d="M1163.500 746h2.500l4-3.500v11l-4-3.500h-2.500z" /><path d="M1172.500 745.500q2 2.500 0 5M1174.500 743.500q3.500 4.500 0 9" stroke-width="1" /><path d="M1176.500 742q5 6 0 12" stroke="#777" stroke-width="1" />
        <path d="M1188 742.500l13-1.500v12M1188 742.500v10.500h8M1191 749q0-4 5-4M1194 751q4 0 4-4" /><circle cx="1198.500" cy="751.500" r="4.300" fill="#e02735" stroke="none" /><path d="M1198.500 749v3M1198.500 753v1" stroke-width="1.200" />
      </svg>
      <span class="lang">ENG</span>
      <div class="clock"><span>12:04</span><span>14-10-2023</span></div>
      <svg width="51" height="40" viewBox="1315 728 51 40"><path d="M1325 740.500h16v12h-8l-4 4v-4h-4z" fill="#fff" /><path d="M1328 743.500h10M1328 746.500h10M1328 749.500h6" stroke="#111" /><circle cx="1340.500" cy="755.500" r="8" fill="#3a3a3a" stroke="#8c8c8c" /><text x="1337" y="760" fill="#fff" font-size="12">4</text><path d="M1361.500 728v40" stroke="#555" /></svg>
    </footer>
  </div>
</template>

<style>
html, body { overflow: hidden; background: #f3f3f3; }
</style>
<style scoped>
.screen { width: 1366px; height: 768px; overflow: hidden; display: flex; flex-direction: column; font-family: Roboto, "Liberation Sans", sans-serif; font-size: 13px; color: #333; background: #f3f3f3; }
.screen * { box-sizing: border-box; }
svg { display: block; flex: none; }
.tabstrip { height: 34px; flex: none; background: #33242d; display: flex; align-items: center; padding-left: 8px; }
.tab { width: 240px; height: 34px; background: #594352; border-radius: 8px 8px 0 0; display: flex; align-items: center; padding: 0 11px 0 11px; color: #f4f0f2; font: 12px "Open Sans", "Noto Sans", sans-serif; }
.tabtitle { margin-left: 9px; flex: 1; letter-spacing: -.5px; }
.newtab { margin-left: 15px; }
.winbtns { margin-left: auto; }
.addressbar { height: 43px; flex: none; background: #594352; border-bottom: 1px solid #82637a; display: flex; align-items: center; }
.omnibox { flex: none; width: 1118px; height: 34px; border-radius: 17px; background: #42323c; display: flex; align-items: center; }
.url { color: #aaa2a7; font: 14px "Open Sans", "Noto Sans", sans-serif; letter-spacing: -.41px; }
.url b { font-weight: 400; color: #fff; letter-spacing: -.38px; }
.omniicons { margin-left: auto; }

.apphead { height: 60px; flex: none; background: #232637; color: #e6e6ea; display: flex; }
.menu { display: grid; grid-template-columns: 41px 48px 83px 85px 70px 46px 62px 40px; margin-left: 10px; padding-top: 34px; font-size: 13px; line-height: 16px; letter-spacing: .2px; }
.doctitle { margin-left: 115px; padding-top: 21px; line-height: 19px; font-size: 16px; font-weight: 700; white-space: nowrap; letter-spacing: .2px; }
.headright { margin-left: auto; display: flex; align-items: flex-start; }
.publish { margin-top: 18px; width: 121px; height: 24px; display: flex; color: #fff; font-weight: 700; }
.publish span { width: 96px; background: #06618d; text-align: center; line-height: 24px; border-radius: 1px; letter-spacing: -.1px; }
.publish i { width: 24px; margin-left: 1px; background: #06618d; display: grid; place-items: center; }
.user { margin: 10px 0 0 16px; width: 106px; height: 40px; border: solid #05060a; border-width: 0 1px; padding-left: 9px; display: flex; align-items: center; gap: 3px; font-size: 14px; white-space: nowrap; letter-spacing: -.2px; }
.closeedit { margin: 22px 20px 0 20px; }

.toolbar { height: 40px; flex: none; background: #f5f5f5; display: flex; align-items: flex-start; padding-top: 1px; }
.screen .tg { box-sizing: content-box; border-right: 1px solid #d4d4d4; }
.screen .tg.last { border: 0; }
.showme { margin-left: auto; margin-right: 23px; height: 39px; display: flex; align-items: center; gap: 8px; letter-spacing: -.25px; }

.work { flex: 1; display: flex; min-height: 0; }
.datapane { width: 200px; flex: none; background: #fff; border: 1px solid #d4d4d4; border-left: 0; display: flex; flex-direction: column; }
.ptabs { display: flex; height: 27px; font-size: 14px; }
.pt { flex: 1; line-height: 27px; padding-left: 12px; background: #fafafa; border: solid #d4d4d4; border-width: 0 0 1px 1px; letter-spacing: .02px; display: flex; align-items: center; justify-content: space-between; padding-right: 7px; }
.pt.on { flex: none; width: 79px; background: #fff; border: 0; letter-spacing: -.1px; }
.sources { height: 54px; padding: 6px 0 0 3px; border-bottom: 1px solid #d4d4d4; }
.src { height: 18px; width: 191px; display: flex; align-items: center; gap: 5px; padding-left: 2px; margin-bottom: 3px; letter-spacing: 0; line-height: 18px; }
.src.sel { background: #e6e6e6; }
.searchrow { display: flex; margin: 12px 0 0 6px; }
.search { width: 130px; height: 24px; border: 1px solid #222; display: flex; align-items: center; gap: 9px; padding-left: 5px; color: #777; letter-spacing: -.05px; }
.tables { font-size: 14px; height: 20px; line-height: 20px; margin: 9px 0 3px 18px; letter-spacing: -.2px; }
.fields { margin-left: 18px; width: 175px; }
.fields.blue { border-bottom: 1px solid #c9c9c9; padding-bottom: 1px; color: #4996b2; }
.fields.green { color: #00b180; }
.field { height: 21px; display: flex; align-items: center; }
.fi { width: 33px; display: flex; padding-left: 4px; }
.fi em { font-style: normal; font-size: 10px; margin-left: -1px; letter-spacing: -.2px; }
.fn { color: #333; font-size: 13px; letter-spacing: 0; white-space: nowrap; }
.fn.it { font-style: italic; }

.cards { width: 178px; flex: none; margin-left: 6px; display: flex; flex-direction: column; gap: 6px; }
.card { border: 1px solid #d4d4d4; background: #fafafa; flex: none; padding: 0 6px; }
.card h4 { margin: 0; font-size: 13px; font-weight: 400; height: 26px; display: flex; align-items: center; gap: 6px; padding: 0 0 2px 2px; letter-spacing: -.15px; }
.pages { height: 46px; } .filters { height: 69px; } .marks { height: 237px; }
.pill { height: 20px; border-radius: 10px; color: #fff; line-height: 21px; padding-left: 11px; letter-spacing: -.22px; white-space: nowrap; }
.bluep { background: #4996b2; letter-spacing: 0; } .greenp { background: #00b180; }
.filters .pill { margin-top: 6px; }
.marktype { margin-top: 3px; height: 24px; border: 1px solid #222; display: flex; align-items: center; padding: 0 5px 0 8px; gap: 5px; letter-spacing: .05px; }
.marktype span { flex: 1; margin-top: -1px; }
.mbtns { display: grid; grid-template-columns: 50px 50px 50px; gap: 6px 7px; margin: 6px 0 12px; }
.mbtn { height: 50px; border: 1px solid #d4d4d4; display: flex; flex-direction: column; align-items: center; font-size: 12px; padding-top: 8px; gap: 4px; line-height: 15px; letter-spacing: 0; }
.mrow { display: flex; align-items: center; margin-bottom: 3px; padding-left: 3px; gap: 7px; }
.mrow .pill { flex: 1; }

.canvas { margin-left: 6px; width: 970px; flex: none; display: flex; flex-direction: column; gap: 6px; }
.shelf { height: 28px; flex: none; border: 1px solid #d4d4d4; background: #fafafa; display: flex; align-items: center; }
.sh { width: 85px; height: 26px; border-right: 1px solid #d4d4d4; display: flex; align-items: center; gap: 5px; padding: 0 0 1px 6px; letter-spacing: -.2px; }
.shelf .pill { width: 150px; margin-left: 6px; }
.lower { display: flex; gap: 6px; align-items: flex-start; }
.view { width: 802px; height: 429px; background: #fff; border: 1px solid #d4d4d4; padding: 0 3px; }
.view h1 { margin: 0; height: 46px; padding: 0 0 0 4px; font: 400 19px/48px "Open Sans", "Noto Sans", sans-serif; color: #222; letter-spacing: .42px; white-space: nowrap; }
.mapbox { position: relative; width: 794px; height: 378px; border: 1px solid #e6e6e6; overflow: hidden; }
.land path { fill: #53769b; stroke: #dfe6ee; stroke-width: 2.600; stroke-linejoin: round; }
.land .ns { stroke: #53769b; stroke-width: 3; }
.land .nd { fill: #ebebeb; stroke: none; }
.land .uk { fill: #6093c0; stroke: none; }
.land .ru { fill: #2f5b88; stroke: none; }
.land .ru.ns { stroke: #2f5b88; stroke-width: 3; }
.land .dots { stroke: #2f5b88; stroke-width: 1; }
.land .dk { fill: #2f5b88; }
.land .ca { fill: #81a8ca; stroke: none; }
.land .ca.ns { stroke: #81a8ca; stroke-width: 5; }
.land .us { fill: #b53758; stroke: none; }
.land .thin { stroke: none; }
.land .bd { fill: none; }
.land .fj { fill: none; stroke: #fff; stroke-width: 4.500; }
.labels text { font: 300 13px "Open Sans", "Noto Sans", sans-serif; text-anchor: middle; fill: #000; stroke: #000; stroke-width: .15; letter-spacing: .1px; }
.mctl { position: absolute; left: 9px; border: 1px solid #ccc; box-shadow: 0 1px 1px #ddd; background: #f8f8f8; }
.find { top: 9px; width: 28px; height: 28px; display: grid; place-items: center; }
.zoomer { top: 50px; width: 28px; height: 103px; }
.credit { position: absolute; left: 3px; bottom: 0; font-size: 11.500px; line-height: 14px; color: #444; letter-spacing: .12px; }
.legend { width: 162px; height: 68px; border: 1px solid #d4d4d4; background: #fff; padding: 4px 7px 0 3px; font: 12px "Open Sans", "Noto Sans", sans-serif; }
.lt { line-height: 16px; white-space: nowrap; letter-spacing: .07px; }
.ramp { margin: 7px 0 0 4px; width: 146px; height: 16px; border: 1px solid #b3a894; display: grid; grid-template-columns: 37px 36px 36px 35px; position: relative; }
.ramp::after { content: ""; position: absolute; left: 59px; top: 15px; width: 1px; height: 4px; background: #000; }
.ramp i:nth-child(1) { background: #5679a0; } .ramp i:nth-child(2) { background: #84abce; } .ramp i:nth-child(3) { background: #f37c74; } .ramp i:nth-child(4) { background: #b83a5d; }
.lr { display: flex; justify-content: space-between; margin: 1px 0 0 4px; font-weight: 300; font-size: 13px; line-height: 17px; color: #111; }

.sheets { height: 30px; flex: none; display: flex; border-top: 1px solid #c9c9c9; background: #e6e6e6; border-bottom: 1px solid #c9c9c9; color: #777; }
.st { display: flex; align-items: center; justify-content: center; gap: 5px; border-right: 1px solid #c6c6c6; white-space: nowrap; flex: none; padding-bottom: 3px; }
.ds { width: 126px; justify-content: flex-start; padding-left: 10px; letter-spacing: -.1px; }
.on.st { background: #fafafa; color: #111; font-weight: 500; letter-spacing: -.2px; padding-left: 2px; }
.w55 { width: 56px; } .w58 { width: 58px; } .w57 { width: 57px; } .w104 { width: 104px; letter-spacing: -.2px; padding-left: 4px; } .w73 { width: 72px; letter-spacing: -.1px; padding-left: 5px; } .w59 { width: 59px; } .w32 { width: 32px; padding-left: 2px; }
.status { height: 18px; flex: none; background: #ebebeb; display: flex; gap: 11.500px; padding-left: 10px; font-size: 11px; line-height: 18px; letter-spacing: -.4px; }
.taskbar { height: 40px; flex: none; background: #0a090a; display: flex; color: #fff; font-family: "Open Sans", "Noto Sans", sans-serif; }
.tsearch { width: 344px; flex: none; background: #f2f2f2; border-top: 1px solid #bbb; display: flex; align-items: center; color: #333; font-size: 14.500px; }
.tsearch span { flex: 1; letter-spacing: -.3px; }
.act { background: #3b3b3b; }
.tray { margin-left: auto; }
.lang { width: 33px; line-height: 39px; text-align: center; font-size: 12px; letter-spacing: -.4px; }
.clock { width: 74px; display: flex; flex-direction: column; align-items: center; font-size: 12px; line-height: 18px; padding-top: 2px; letter-spacing: -.5px; }
</style>
